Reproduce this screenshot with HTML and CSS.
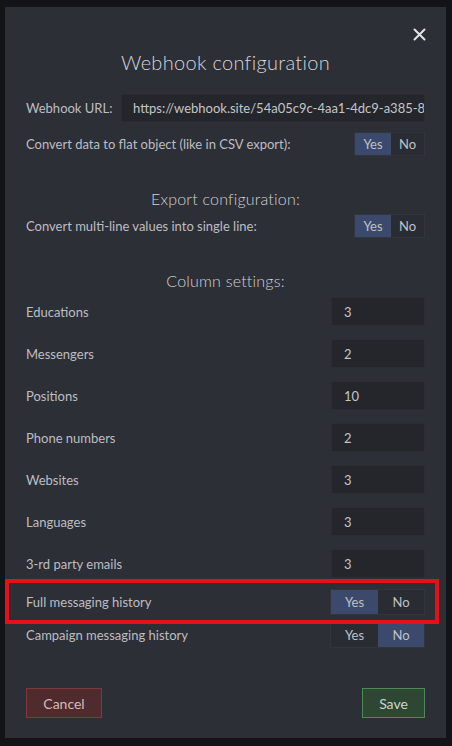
FILE: index.html
```html
<!DOCTYPE html>
<html>
<head>
<meta charset="utf-8">
<link rel="stylesheet" href="styles.css">
</head>
<body>
<div class="modal">
  <button class="close" aria-label="Close">
    <svg width="13" height="13" viewBox="0 0 13 13"><path d="M1.5 1.5L11.5 11.5M11.5 1.5L1.5 11.5" stroke="#e4e4e6" stroke-width="2" stroke-linecap="round"/></svg>
  </button>
  <h1 class="title">Webhook configuration</h1>

  <div class="row url-row">
    <label class="label">Webhook URL:</label>
    <input class="url-input" type="text" value="https://webhook.site/54a05c9c-4aa1-4dc9-a385-83b1f2c7e901">
  </div>

  <div class="row toggle-row first">
    <span class="label">Convert data to flat object (like in CSV export):</span>
    <div class="toggle small"><span class="opt on">Yes</span><span class="opt">No</span></div>
  </div>

  <h2 class="section">Export configuration:</h2>
  <div class="row toggle-row tight">
    <span class="label">Convert multi-line values into single line:</span>
    <div class="toggle small"><span class="opt on">Yes</span><span class="opt">No</span></div>
  </div>

  <h2 class="section">Column settings:</h2>
  <div class="columns">
    <div class="row num-row"><span class="label">Educations</span><input class="num" type="text" value="3"></div>
    <div class="row num-row"><span class="label">Messengers</span><input class="num" type="text" value="2"></div>
    <div class="row num-row"><span class="label">Positions</span><input class="num" type="text" value="10"></div>
    <div class="row num-row"><span class="label">Phone numbers</span><input class="num" type="text" value="2"></div>
    <div class="row num-row"><span class="label">Websites</span><input class="num" type="text" value="3"></div>
    <div class="row num-row"><span class="label">Languages</span><input class="num" type="text" value="3"></div>
    <div class="row num-row"><span class="label">3-rd party emails</span><input class="num" type="text" value="3"></div>
  </div>

  <div class="row toggle-row hist highlighted">
    <span class="label">Full messaging history</span>
    <div class="toggle wide"><span class="opt on">Yes</span><span class="opt">No</span></div>
    <span class="highlight"></span>
  </div>
  <div class="row toggle-row hist2">
    <span class="label">Campaign messaging history</span>
    <div class="toggle wide"><span class="opt">Yes</span><span class="opt on">No</span></div>
  </div>

  <div class="actions">
    <button class="btn cancel">Cancel</button>
    <button class="btn save">Save</button>
  </div>
</div>
</body>
</html>
```

FILE: styles.css
```css
* { box-sizing: border-box; }
html, body {
  margin: 0;
  padding: 0;
  background: #131417;
  width: 452px;
  height: 746px;
  overflow: hidden;
}
body {
  font-family: Lato, "Open Sans", sans-serif;
  color: #c3c5ca;
  padding: 7px 6px 8px 5px;
}
.modal {
  position: relative;
  width: 441px;
  height: 731px;
  background: #2d2f36;
  padding: 41px 21px 20px 21px;
  display: flex;
  flex-direction: column;
}
.close {
  position: absolute;
  top: 21px;
  right: 20px;
  width: 13px;
  height: 13px;
  padding: 0;
  border: 0;
  background: none;
  display: flex;
}
.title {
  margin: 0;
  font-weight: 300;
  font-size: 20px;
  line-height: 28px;
  text-align: center;
  color: #d4d5d8;
  letter-spacing: 0.3px;
}
.row {
  display: flex;
  align-items: center;
  justify-content: space-between;
}
.label {
  font-size: 13px;
  color: #bcbec3;
}
.url-row {
  margin-top: 18px;
  height: 28px;
}
.url-input {
  width: 304px;
  height: 28px;
  background: #25262b;
  border: 1px solid #2b2c31;
  color: #c3c5c9;
  font-family: Lato, "Open Sans", sans-serif;
  font-size: 13px;
  padding: 0 0 0 11px;
  outline: none;
}
.toggle-row { height: 24px; }
.toggle-row.first { margin-top: 10px; }
.toggle-row.tight { margin-top: 3px; }
.toggle {
  display: flex;
  height: 24px;
  border: 1px solid #33353c;
  background: #2a2c33;
}
.opt {
  display: flex;
  align-items: center;
  justify-content: center;
  font-size: 13px;
  color: #bfc1c6;
}
.opt.on { background: #3b4a6c; }
.toggle.small .opt:first-child { width: 36px; }
.toggle.small .opt:last-child { width: 33px; }
.toggle.wide .opt:first-child { width: 47px; }
.toggle.wide .opt:last-child { width: 46px; }
.toggle.wide { height: 26px; }
.section {
  margin: 31px 0 0;
  font-weight: 300;
  font-size: 16px;
  line-height: 24px;
  text-align: center;
  color: #d0d1d5;
  letter-spacing: 0.2px;
}
.columns {
  margin-top: 4px;
  display: flex;
  flex-direction: column;
  gap: 13px;
}
.num-row { height: 29px; }
.num {
  width: 94px;
  height: 29px;
  background: #25262b;
  border: 1px solid #2c2d32;
  color: #c3c5c9;
  font-family: Lato, "Open Sans", sans-serif;
  font-size: 13px;
  padding: 0 0 0 12px;
  outline: none;
}
.hist {
  margin-top: 11px;
  height: 26px;
  position: relative;
}
.hist2 {
  margin-top: 7px;
  height: 26px;
}
.highlight {
  position: absolute;
  left: -21px;
  right: -14px;
  top: -10px;
  bottom: -9px;
  border: 4px solid #e3121a;
  pointer-events: none;
}
.actions {
  margin-top: auto;
  display: flex;
  justify-content: space-between;
}
.btn {
  height: 30px;
  font-family: Lato, "Open Sans", sans-serif;
  font-size: 14px;
  padding: 0;
}
.cancel {
  width: 76px;
  background: #4f2b2e;
  border: 1px solid #7c3a3c;
  color: #d6b9ba;
}
.save {
  width: 63px;
  background: #2e4634;
  border: 1px solid #4d8a55;
  color: #c9d6ca;
}
```
